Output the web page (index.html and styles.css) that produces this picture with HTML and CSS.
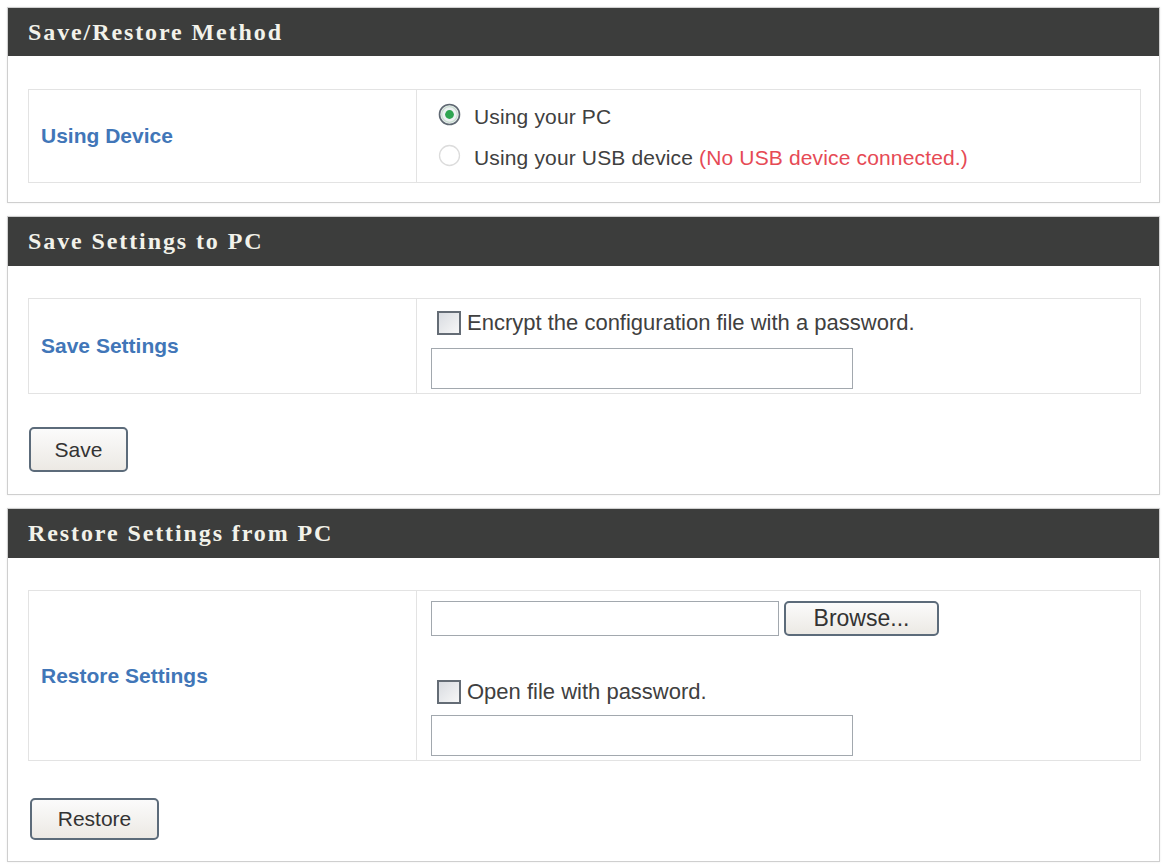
FILE: index.html
```html
<!DOCTYPE html>
<html lang="en">
<head>
    <meta charset="UTF-8">
    <meta name="viewport" content="width=device-width, initial-scale=1.0">
    <title>Save/Restore Settings</title>
    <link rel="stylesheet" href="styles.css">
</head>
<body>

    <div class="panel panel-method">
        <div class="panel-title">Save/Restore Method</div>
        <div class="panel-body">
            <div class="setting-row">
                <div class="setting-label">Using Device</div>
                <div class="setting-value">
                    <label class="option">
                        <svg class="radio" width="23" height="23" viewBox="0 0 23 23">
                            <circle cx="11.5" cy="11.5" r="10" fill="#eef1f3" stroke="#5f6872" stroke-width="1.6"/>
                            <circle cx="11.5" cy="11.5" r="7.8" fill="none" stroke="#c9ddd0" stroke-width="1.2"/>
                            <circle cx="11.5" cy="11.5" r="4.4" fill="#2fa551"/>
                        </svg>
                        <span>Using your PC</span>
                    </label>
                    <label class="option">
                        <svg class="radio" width="23" height="23" viewBox="0 0 23 23">
                            <circle cx="11.5" cy="11.5" r="10" fill="#ffffff" stroke="#dcdcdc" stroke-width="1.3"/>
                        </svg>
                        <span>Using your USB device <span class="warn">(No USB device connected.)</span></span>
                    </label>
                </div>
            </div>
        </div>
    </div>

    <div class="panel panel-save">
        <div class="panel-title">Save Settings to PC</div>
        <div class="panel-body">
            <div class="setting-row">
                <div class="setting-label">Save Settings</div>
                <div class="setting-value">
                    <label class="check-line">
                        <span class="checkbox"></span>
                        <span>Encrypt the configuration file with a password.</span>
                    </label>
                    <input type="password" class="text-input">
                </div>
            </div>
            <button class="btn btn-save">Save</button>
        </div>
    </div>

    <div class="panel panel-restore">
        <div class="panel-title">Restore Settings from PC</div>
        <div class="panel-body">
            <div class="setting-row">
                <div class="setting-label">Restore Settings</div>
                <div class="setting-value">
                    <div class="file-line">
                        <input type="text" class="file-input">
                        <button class="btn btn-browse">Browse...</button>
                    </div>
                    <label class="check-line check-open">
                        <span class="checkbox"></span>
                        <span>Open file with password.</span>
                    </label>
                    <input type="password" class="text-input">
                </div>
            </div>
            <button class="btn btn-restore">Restore</button>
        </div>
    </div>

</body>
</html>
```

FILE: styles.css
```css
body {
    font-family: 'Liberation Sans', Arial, sans-serif;
    background-color: #ffffff;
    margin: 0;
    padding: 7px 5px 0 7px;
    color: #3a3a3a;
}

.panel {
    border: 1px solid #cfcfcf;
    box-shadow: 0 0 2px rgba(0, 0, 0, 0.08);
    margin-bottom: 13px;
    background: #ffffff;
}

.panel-title {
    height: 49px;
    background-color: #3c3d3c;
    color: #f2f2ea;
    font-family: 'Liberation Serif', 'Times New Roman', serif;
    font-weight: bold;
    font-size: 24px;
    letter-spacing: 1.9px;
    display: flex;
    align-items: center;
    padding-left: 20px;
}

.panel-method .panel-title {
    height: 48px;
}

.panel-body {
    padding: 33px 18px 19px 20px;
}

.panel-save .panel-body {
    padding: 32px 18px 22px 20px;
}

.panel-restore .panel-body {
    padding: 32px 18px 21px 20px;
}

.setting-row {
    display: grid;
    grid-template-columns: 388px 1fr;
    border: 1px solid #e3e3e3;
}

.setting-label {
    display: flex;
    align-items: center;
    padding-left: 12px;
    border-right: 1px solid #e3e3e3;
    color: #4176b8;
    font-weight: bold;
    font-size: 21px;
}

.setting-value {
    padding: 6px 14px 4px 14px;
    font-size: 21px;
    color: #404040;
}

.option {
    display: flex;
    align-items: center;
    height: 41px;
    padding-left: 7px;
    letter-spacing: 0.15px;
}

.option .radio {
    flex-shrink: 0;
    margin-right: 13px;
    margin-top: -4px;
}

.warn {
    color: #e64a55;
}

.check-line {
    display: flex;
    align-items: center;
    height: 30px;
    padding-left: 6px;
    margin-top: 3px;
    font-size: 22px;
}

.checkbox {
    width: 20px;
    height: 20px;
    border: 2px solid #646c75;
    background: linear-gradient(135deg, #d9dce1, #f7f7f7);
    margin-right: 6px;
    flex-shrink: 0;
}

.text-input, .file-input {
    display: block;
    box-sizing: border-box;
    height: 41px;
    border: 1px solid #a2a8ae;
    background: #ffffff;
    margin: 0;
}

.text-input {
    width: 422px;
    margin-top: 10px;
}

.file-line {
    display: flex;
    align-items: center;
    gap: 5px;
    margin-top: 4px;
}

.file-input {
    width: 348px;
    height: 35px;
}

.check-open {
    margin-top: 41px;
}

.check-open + .text-input {
    margin-top: 8px;
}

.btn {
    font-family: 'Liberation Sans', Arial, sans-serif;
    font-size: 21px;
    color: #333333;
    background: linear-gradient(#fbfbfb, #ece9e4);
    border: 2px solid #5c6b7a;
    border-radius: 5px;
    padding: 0;
    cursor: pointer;
    display: block;
}

.btn-save {
    width: 99px;
    height: 45px;
    margin-top: 33px;
    margin-left: 1px;
}

.btn-restore {
    width: 129px;
    height: 42px;
    margin-top: 37px;
    margin-left: 2px;
}

.btn-browse {
    width: 155px;
    height: 35px;
    font-size: 23px;
}
```
